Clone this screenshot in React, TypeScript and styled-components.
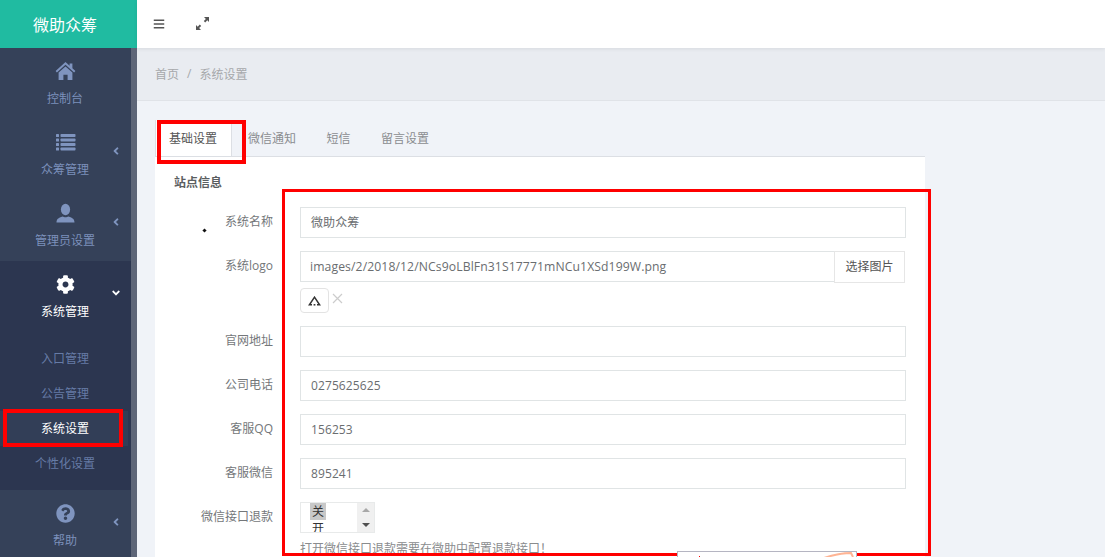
import React from "react";
import styled, { createGlobalStyle } from "styled-components";
import { FaAngleDown, FaAngleLeft, FaBars, FaCog, FaQuestionCircle } from "react-icons/fa";

const GlobalStyle = createGlobalStyle`
  html, body {
    margin: 0;
    padding: 0;
    height: 557px;
    overflow: hidden;
    background: #f0f3f8;
  }
  * {
    box-sizing: border-box;
  }
  body {
    font-family: "Open Sans", "Noto Sans CJK SC", sans-serif;
    font-size: 12px;
    color: #676a6c;
  }
`;

const Page = styled.div`
  position: relative;
  display: flex;
  width: 1105px;
  height: 557px;
  overflow: hidden;
`;

const Aside = styled.aside`
  display: flex;
  flex-direction: column;
  flex: 0 0 137px;
  height: 557px;
`;

const Logo = styled.div`
  display: flex;
  align-items: center;
  justify-content: center;
  height: 48px;
  padding-right: 7px;
  background: #20bba1;
  color: #fff;
  font-size: 16px;
`;

const SideBody = styled.div`
  display: flex;
  flex: 1;
  min-height: 0;
`;

const Nav = styled.nav`
  flex: 0 0 131px;
  background: #354159;
  overflow: hidden;
`;

const Scroll = styled.div`
  flex: 0 0 6px;
  background: #5e6678;
`;

const Group = styled.div<{ $open?: boolean }>`
  background: ${(p) => (p.$open ? "#2c3650" : "transparent")};
  padding-bottom: ${(p) => (p.$open ? "9px" : "0")};
`;

const NavItem = styled.div<{ $open?: boolean }>`
  position: relative;
  display: flex;
  flex-direction: column;
  align-items: center;
  height: 71px;
  padding: 13px 1px 0 0;
  color: ${(p) => (p.$open ? "#fff" : "#7c90bb")};
  svg.main {
    width: 21px;
    height: 21px;
    color: ${(p) => (p.$open ? "#fff" : "#7f94bf")};
  }
  svg.round {
    width: 19px;
    height: 19px;
    margin: 1px 0;
    color: ${(p) => (p.$open ? "#fff" : "#7f94bf")};
  }
`;

const NavLabel = styled.span`
  margin-top: 8px;
  line-height: 18px;
`;

const Caret = styled.span`
  position: absolute;
  top: 26px;
  right: 9px;
  display: flex;
  font-size: 12px;
  color: #7f94bf;
`;

const OpenCaret = styled(Caret)`
  color: #fff;
`;

const SubList = styled.div`
  margin-top: 9px;
`;

const SubItem = styled.div<{ $active?: boolean }>`
  height: 35px;
  line-height: 35px;
  margin-right: 3px;
  padding-left: 2px;
  text-align: center;
  color: ${(p) => (p.$active ? "#fff" : "#667ba6")};
  background: ${(p) => (p.$active ? "#323e57" : "transparent")};
`;

const Main = styled.main`
  display: flex;
  flex-direction: column;
  flex: 1;
  min-width: 0;
`;

const TopBar = styled.header`
  display: flex;
  align-items: center;
  gap: 31px;
  height: 48px;
  padding-left: 16px;
  background: #fff;
  color: #555;
  box-shadow: 0 1px 4px rgba(0, 0, 0, 0.08);
  position: relative;
`;

const Crumbs = styled.div`
  display: flex;
  align-items: center;
  gap: 8px;
  height: 54px;
  padding-left: 18px;
  background: #e9ecf1;
  border-bottom: 1px solid #e0e3e8;
  color: #a6a8ab;
`;

const Content = styled.div`
  flex: 1;
  padding: 19px 180px 0 18px;
`;

const Tabs = styled.div`
  display: flex;
  height: 37px;
  border-bottom: 1px solid #dcdfe4;
`;

const Tab = styled.div<{ $active?: boolean }>`
  height: 36px;
  line-height: 38px;
  padding: 0 14px 0 ${(p) => (p.$active ? "13px" : "14px")};
  color: ${(p) => (p.$active ? "#555" : "#8b8d90")};
  background: ${(p) => (p.$active ? "#fff" : "transparent")};
  border-right: ${(p) => (p.$active ? "1px solid #dcdfe4" : "none")};
  border-left: ${(p) => (p.$active ? "1px solid #dcdfe4" : "none")};
  margin-right: ${(p) => (p.$active ? "2px" : "2.5px")};
`;

const Panel = styled.section`
  height: 400px;
  padding: 17px 20px 0 19px;
  background: #fff;
`;

const SectionTitle = styled.h3`
  margin: 0 0 15px;
  font-size: 12px;
  line-height: 18px;
  font-weight: 700;
  color: #5b5e61;
`;

const Row = styled.div<{ $gap?: number }>`
  display: grid;
  grid-template-columns: 99px 606px;
  column-gap: 27px;
  margin-bottom: ${(p) => p.$gap ?? 13}px;
`;

const Label = styled.label`
  padding-top: 6px;
  text-align: right;
  line-height: 18px;
  color: #74777a;
  white-space: nowrap;
`;

const FieldText = styled.div`
  height: 31px;
  padding: 0 10px;
  line-height: 29px;
  border: 1px solid #e0e4e5;
  background: #fff;
  font-size: 12px;
  color: #6a6d70;
  letter-spacing: 0.1px;
`;

const InputGroup = styled.div`
  display: flex;
  width: 605px;
  height: 32px;
`;

const GroupField = styled(FieldText)`
  flex: 1;
  padding-left: 9px;
  border-right: none;
  font-size: 12.2px;
`;

const PickButton = styled.div`
  flex: 0 0 71px;
  height: 32px;
  line-height: 30px;
  text-align: center;
  border: 1px solid #e6e6e6;
  color: #555;
`;

const ThumbRow = styled.div`
  display: flex;
  gap: 3px;
  margin-top: 5px;
`;

const Thumb = styled.div`
  display: flex;
  align-items: center;
  justify-content: center;
  width: 29px;
  height: 25px;
  border: 1px solid #e3e3e3;
  border-radius: 4px;
`;

const CloseSvg = styled.svg`
  margin-top: 5px;
`;

const ListBox = styled.div`
  display: flex;
  width: 75px;
  height: 31px;
  overflow: hidden;
  border: 1px solid #e8eaea;
`;

const Options = styled.div`
  flex: 1;
  padding-left: 9px;
  color: #333;
  line-height: 17px;
`;

const Option = styled.div<{ $selected?: boolean }>`
  width: 16px;
  text-align: center;
  background: ${(p) => (p.$selected ? "#c8c8c8" : "transparent")};
`;

const Spinner = styled.div`
  display: flex;
  flex: 0 0 17px;
  flex-direction: column;
  align-items: center;
  justify-content: space-between;
  padding: 5px 0;
  background: #f0f0f0;
`;

const Arrow = styled.span<{ $down?: boolean }>`
  width: 0;
  height: 0;
  border-left: 4px solid transparent;
  border-right: 4px solid transparent;
  border-bottom: ${(p) => (p.$down ? "none" : "4px solid #a8a8a8")};
  border-top: ${(p) => (p.$down ? "4px solid #505050" : "none")};
`;

const Help = styled.div`
  margin-top: 8px;
  line-height: 16px;
  color: #8a8c8e;
`;

const RedBox = styled.div<{ $x: number; $y: number; $w: number; $h: number; $t: number }>`
  position: absolute;
  left: ${(p) => p.$x}px;
  top: ${(p) => p.$y}px;
  width: ${(p) => p.$w}px;
  height: ${(p) => p.$h}px;
  border: ${(p) => p.$t}px solid #f00;
  pointer-events: none;
`;

const CursorDot = styled.div`
  position: absolute;
  left: 203px;
  top: 229px;
  width: 3px;
  height: 3px;
  background: #111;
  transform: rotate(45deg);
`;

const Callout = styled.div`
  position: absolute;
  left: 677px;
  top: 551px;
  width: 180px;
  height: 20px;
  background: #fff;
  border: 1px solid #b5b5c2;
`;

const CalloutMark = styled.span`
  position: absolute;
  left: 21px;
  top: 4px;
  width: 1px;
  height: 2px;
  background: #f00;
`;

const CalloutStroke = styled.svg`
  position: absolute;
  right: 1px;
  top: 0;
`;

const HomeIcon = () => (
  <svg className="main" viewBox="0 0 21 21" fill="currentColor">
    <path d="M10.5 1 .6 10l1.3 1.5 8.6-7.7 8.6 7.7 1.3-1.5-3-2.7V2.5h-2.8v2.3Z" />
    <path d="M10.5 5.4 3.6 11.6V19H8.4v-5.2h4.2V19h4.8v-7.4Z" />
  </svg>
);

const ListIcon = () => (
  <svg className="main" viewBox="0 0 21 21" fill="currentColor">
    <rect x="1" y="2" width="3" height="3" rx="0.6" />
    <rect x="1" y="6.5" width="3" height="3" rx="0.6" />
    <rect x="1" y="11" width="3" height="3" rx="0.6" />
    <rect x="1" y="15.5" width="3" height="3" rx="0.6" />
    <rect x="5.5" y="2" width="15" height="3" rx="0.8" />
    <rect x="5.5" y="6.5" width="15" height="3" rx="0.8" />
    <rect x="5.5" y="11" width="15" height="3" rx="0.8" />
    <rect x="5.5" y="15.5" width="15" height="3" rx="0.8" />
  </svg>
);

const UserIcon = () => (
  <svg className="main" viewBox="0 0 21 21" fill="currentColor">
    <ellipse cx="10.5" cy="6.5" rx="4.6" ry="5.7" />
    <path d="M1.5 19.5c0-3.4 1.6-4.6 6.2-6.1 1.2 1 4.4 1 5.6 0 4.6 1.5 6.2 2.7 6.2 6.1Z" />
  </svg>
);

const ExpandIcon = () => (
  <svg width="13" height="13" viewBox="0 0 13 13" fill="#555">
    <path d="M8 0h5v5l-1.7-1.7-2.1 2.1-1.4-1.4 2.1-2.1ZM5 13H0V8l1.7 1.7 2.1-2.1 1.4 1.4-2.1 2.1Z" />
  </svg>
);

const ThumbIcon = () => (
  <svg width="13" height="10" viewBox="0 0 13 10" fill="none" stroke="#333" strokeWidth="1.5">
    <path d="M4 8.8H1.4L6.5 1.2 11.6 8.8H9" />
    <path d="M5.6 8.8H7.4" />
  </svg>
);

const CloseMark = () => (
  <CloseSvg width="11" height="11" viewBox="0 0 11 11" stroke="#ccc" strokeWidth="1.2" fill="none">
    <path d="M1 10 10 1M1 1 10 10" />
  </CloseSvg>
);

export default function App() {
  return (
    <Page>
      <GlobalStyle />
      <Aside>
        <Logo>微助众筹</Logo>
        <SideBody>
          <Nav>
            <NavItem>
              <HomeIcon />
              <NavLabel>控制台</NavLabel>
            </NavItem>
            <NavItem>
              <ListIcon />
              <NavLabel>众筹管理</NavLabel>
              <Caret>
                <FaAngleLeft />
              </Caret>
            </NavItem>
            <NavItem>
              <UserIcon />
              <NavLabel>管理员设置</NavLabel>
              <Caret>
                <FaAngleLeft />
              </Caret>
            </NavItem>
            <Group $open>
              <NavItem $open>
                <FaCog className="round" />
                <NavLabel>系统管理</NavLabel>
                <OpenCaret>
                  <FaAngleDown />
                </OpenCaret>
              </NavItem>
              <SubList>
                <SubItem>入口管理</SubItem>
                <SubItem>公告管理</SubItem>
                <SubItem $active>系统设置</SubItem>
                <SubItem>个性化设置</SubItem>
              </SubList>
            </Group>
            <NavItem>
              <FaQuestionCircle className="round" />
              <NavLabel>帮助</NavLabel>
              <Caret>
                <FaAngleLeft />
              </Caret>
            </NavItem>
          </Nav>
          <Scroll />
        </SideBody>
      </Aside>
      <Main>
        <TopBar>
          <FaBars size={12} />
          <ExpandIcon />
        </TopBar>
        <Crumbs>
          <span>首页</span>
          <span>/</span>
          <span>系统设置</span>
        </Crumbs>
        <Content>
          <Tabs>
            <Tab $active>基础设置</Tab>
            <Tab>微信通知</Tab>
            <Tab>短信</Tab>
            <Tab>留言设置</Tab>
          </Tabs>
          <Panel>
            <SectionTitle>站点信息</SectionTitle>
            <Row>
              <Label>系统名称</Label>
              <FieldText>微助众筹</FieldText>
            </Row>
            <Row>
              <Label>系统logo</Label>
              <div>
                <InputGroup>
                  <GroupField>images/2/2018/12/NCs9oLBlFn31S17771mNCu1XSd199W.png</GroupField>
                  <PickButton>选择图片</PickButton>
                </InputGroup>
                <ThumbRow>
                  <Thumb>
                    <ThumbIcon />
                  </Thumb>
                  <CloseMark />
                </ThumbRow>
              </div>
            </Row>
            <Row>
              <Label>官网地址</Label>
              <FieldText />
            </Row>
            <Row>
              <Label>公司电话</Label>
              <FieldText>0275625625</FieldText>
            </Row>
            <Row>
              <Label>客服QQ</Label>
              <FieldText>156253</FieldText>
            </Row>
            <Row>
              <Label>客服微信</Label>
              <FieldText>895241</FieldText>
            </Row>
            <Row>
              <Label>微信接口退款</Label>
              <div>
                <ListBox>
                  <Options>
                    <Option $selected>关</Option>
                    <Option>开</Option>
                  </Options>
                  <Spinner>
                    <Arrow />
                    <Arrow $down />
                  </Spinner>
                </ListBox>
                <Help>打开微信接口退款需要在微助中配置退款接口！</Help>
              </div>
            </Row>
          </Panel>
        </Content>
      </Main>
      <CursorDot />
      <RedBox $x={157} $y={120} $w={89} $h={44} $t={4} />
      <RedBox $x={3} $y={409} $w={120} $h={38} $t={4} />
      <RedBox $x={282} $y={189} $w={649} $h={367} $t={3} />
      <Callout>
        <CalloutMark />
        <CalloutStroke width="32" height="6" viewBox="0 0 32 6" fill="none" stroke="#ffb494" strokeWidth="2">
          <path d="M1 6C10 3 20 1 28 1L30 5" />
        </CalloutStroke>
      </Callout>
    </Page>
  );
}
